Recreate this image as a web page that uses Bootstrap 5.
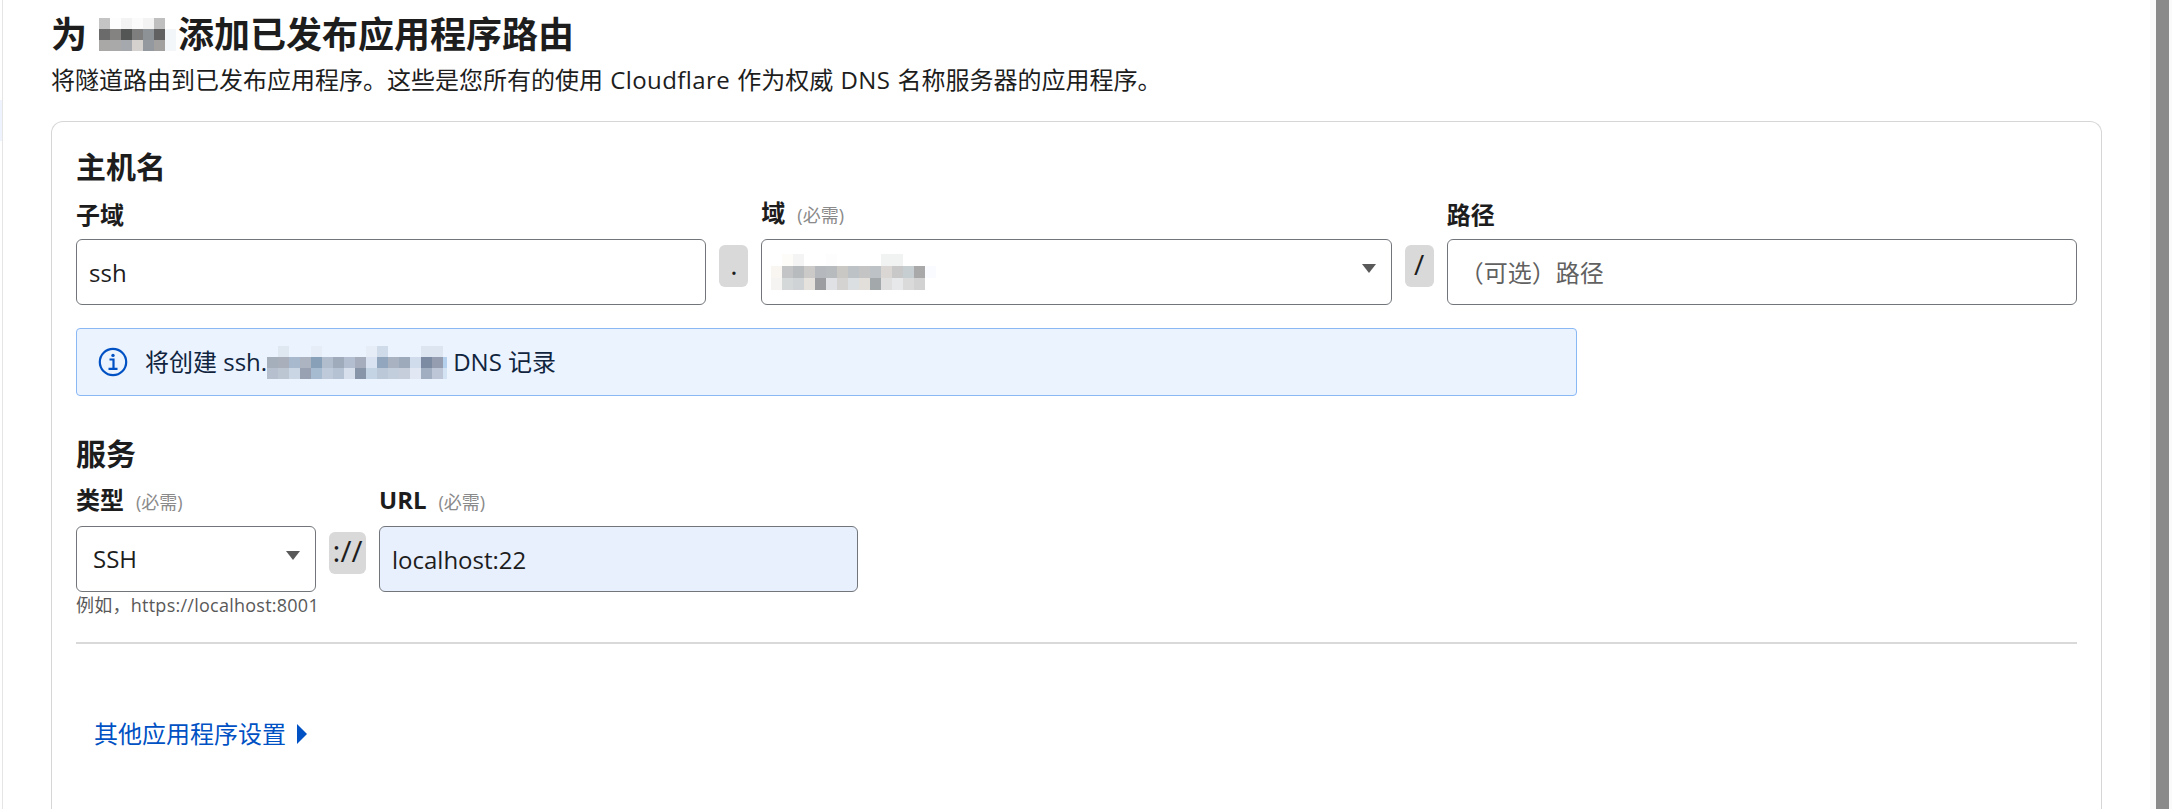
<!DOCTYPE html>
<html lang="zh-CN">
<head>
    <meta charset="UTF-8">
    <meta name="viewport" content="width=device-width, initial-scale=1.0">
    <title>添加已发布应用程序路由</title>
    <link href="https://cdn.jsdelivr.net/npm/bootstrap@5.3.1/dist/css/bootstrap.min.css" rel="stylesheet">
    <script src="https://cdn.jsdelivr.net/npm/bootstrap@5.3.1/dist/js/bootstrap.bundle.min.js"></script>
    <style>
        html, body { height: 100%; overflow: hidden; }
        body {
            background: #fff;
            color: #1d1d1d;
            font-family: "Open Sans", "Noto Sans CJK SC", sans-serif;
            font-size: 24px;
        }
        .page-wrap { height: 809px; }

        /* sidebar edge + scrollbar */
        .side-edge { width: 3px; border-right: 1px solid #e5e5e5; padding-top: 100px; flex: none; }
        .side-edge div { height: 41px; background: #eef3fd; }
        .scroll-track { width: 22px; flex: none; background: #fafafa; padding-left: 6px; }
        .scroll-thumb { width: 13px; height: 100%; background: #8a8a8a; }

        .main-area { padding: 13px 48px 0; min-width: 0; }
        .page-title { font-size: 36px; font-weight: 700; line-height: 44px; margin: 0; color: #1d1d1d; gap: 12px; }
        .page-title .mosaic { overflow: visible; }
        .page-sub { font-size: 24px; line-height: 36px; margin: 5px 0 0; word-spacing: 1px; }
        .latin-word { letter-spacing: .4px; }

        .form-box {
            margin-top: 23px;
            border: 1px solid #d6d6d6;
            border-bottom: 0;
            border-radius: 12px 12px 0 0;
            padding: 25px 24px 0;
            overflow: hidden;
        }
        .sec-title { font-size: 30px; font-weight: 700; line-height: 40px; margin: 0 0 8px; }
        .sec-second { margin-top: 38px; }
        .field-row { gap: 13px; }
        .field { flex: 1 1 0; min-width: 0; }
        .field-type { flex: 0 0 240px; min-width: 0; }
        .field-url { flex: 0 0 479px; }
        .field-label { font-size: 24px; font-weight: 700; line-height: 36px; margin: 0 0 6px; display: block; }
        .field-label small { font-size: 18px; font-weight: 400; color: #8a8a8a; margin-left: 12px; }

        .form-control.cf-input, .form-select.cf-input {
            height: 66px;
            border: 1px solid #72767b;
            border-radius: 6px;
            box-shadow: none;
            color: #1d1d1d;
            font-size: 24px;
            padding: 0 12px;
        }
        .form-control.cf-input::placeholder { color: #616161; opacity: 1; }
        .form-select.cf-input {
            padding-left: 16px;
            background-image: url("data:image/svg+xml,%3Csvg xmlns='http://www.w3.org/2000/svg' viewBox='0 0 14 9'%3E%3Cpath fill='%23595959' d='M0 0h14L7 9z'/%3E%3C/svg%3E");
            background-size: 14px 9px;
            background-position: right 15px top 24px;
        }
        .select-fake { display: flex; align-items: center; padding-left: 9px !important; }
        .input-filled { background: #e8f0fe !important; }

        .sep-chip {
            flex: none;
            width: 29px;
            height: 42px;
            margin-bottom: 18px;
            background: #d9d9d9;
            border-radius: 6px;
            font-size: 28px;
            line-height: 38px;
            text-align: center;
        }
        .sep-chip-wide { width: 37px; font-size: 30px; white-space: nowrap; margin-bottom: 0; margin-top: 50px; align-self: flex-start; }

        .info-note {
            width: 1501px;
            height: 68px;
            margin-top: 23px;
            padding: 0 0 0 21px;
            gap: 17px;
            background: #ebf3fe;
            border: 1px solid #89b8f5;
            border-radius: 4px;
            color: #10243e;
        }
        .note-text { line-height: 32px; }
        .note-text svg { margin: 0 6px 0 0; }

        .hint-text { font-size: 18px; line-height: 26px; color: #595959; margin-top: 0; white-space: nowrap; letter-spacing: .25px; }
        .divider-line { height: 2px; background: #d9d9d9; opacity: 1; border: 0; margin: 24px 0 0; }
        .more-link { color: #0051c3; text-decoration: none; font-size: 24px; line-height: 36px; margin: 72px 0 0 18px; gap: 11px; }
        .mosaic { display: block; flex: none; }
    </style>
</head>
<body>
    <div class="page-wrap d-flex">
        <div class="side-edge"><div></div></div>

        <div class="main-area flex-grow-1 d-flex flex-column">
            <h1 class="page-title d-flex align-items-center">
                <span>为</span>
                <svg class="mosaic" id="blur-title" width="67" height="34"></svg>
                <span class="title-rest">添加已发布应用程序路由</span>
            </h1>
            <p class="page-sub">将隧道路由到已发布应用程序。这些是您所有的使用 <span class="latin-word">Cloudflare</span> 作为权威 <span class="latin-word">DNS</span> 名称服务器的应用程序。</p>

            <div class="form-box flex-grow-1">
                <h2 class="sec-title">主机名</h2>
                <div class="d-flex field-row align-items-end">
                    <div class="field">
                        <label class="field-label" for="sub">子域</label>
                        <input class="form-control cf-input" id="sub" type="text" value="ssh">
                    </div>
                    <div class="sep-chip">.</div>
                    <div class="field">
                        <span class="field-label">域<small>(必需)</small></span>
                        <div class="form-select cf-input select-fake">
                            <svg class="mosaic" id="blur-domain" width="165" height="36"></svg>
                        </div>
                    </div>
                    <div class="sep-chip">/</div>
                    <div class="field">
                        <label class="field-label" for="path">路径</label>
                        <input class="form-control cf-input" id="path" type="text" placeholder="（可选）路径">
                    </div>
                </div>

                <div class="info-note d-flex align-items-center">
                    <svg width="30" height="30" viewBox="0 0 30 30" fill="none" stroke="#0051c3">
                        <circle cx="15" cy="15" r="13.2" stroke-width="2.2"/>
                        <path d="M11.5 12.5h4v9M10.5 21.8h9" stroke-width="2.2"/>
                        <circle cx="15" cy="8.4" r="1.7" fill="#0051c3" stroke="none"/>
                    </svg>
                    <div class="note-text d-flex align-items-center">
                        <span>将创建 ssh.</span>
                        <svg class="mosaic" id="blur-host" width="180" height="33"></svg>
                        <span>DNS 记录</span>
                    </div>
                </div>

                <h2 class="sec-title sec-second">服务</h2>
                <div class="d-flex field-row">
                    <div class="field-type">
                        <span class="field-label">类型<small>(必需)</small></span>
                        <select class="form-select cf-input">
                            <option>SSH</option>
                        </select>
                        <div class="hint-text">例如，https://localhost:8001</div>
                    </div>
                    <div class="sep-chip sep-chip-wide">://</div>
                    <div class="field-url">
                        <label class="field-label" for="url">URL<small>(必需)</small></label>
                        <input class="form-control cf-input input-filled" id="url" type="text" value="localhost:22">
                    </div>
                </div>

                <hr class="divider-line">
                <a class="more-link d-inline-flex align-items-center" href="#">
                    <span>其他应用程序设置</span>
                    <svg width="10" height="20" viewBox="0 0 10 20"><path fill="#0051c3" d="M0 0l10 10L0 20z"/></svg>
                </a>
            </div>
        </div>

        <div class="scroll-track"><div class="scroll-thumb"></div></div>
    </div>

    <script>
        // blurred-out names in the screenshot, drawn as pixel blocks
        const blurData = {
            "blur-title": { rowH: 11, rows: [
                ["#c4c4c4", "#fdfdfd", "#f3f3f3", "#fbfbfb", "#f3f3f3", "#bfbfbf"],
                ["#6b6b6b", "#858382", "#545555", "#7e7e7e", "#8d9297", "#616161", "#f3f6f9"],
                ["#a9a8a7", "#a9a9a9", "#a5a9ad", "#d4d1ce", "#93999e", "#a3a19f", "#f4f7fa"]
            ] },
            "blur-domain": { rowH: 12, rows: [
                [null, "#fdfcf9", "#f4f4f4", null, null, "#fdfdfd", null, null, null, null, "#f1f3f2", "#f1f3f2"],
                ["#f9f5f0", "#c2c4c6", "#b8bbbe", "#cbcac8", "#b5b8bc", "#b8bbbe", "#cac8c5", "#bdc2c6", "#c5c4c4", "#bcc2c6", "#d9d6d3", "#c8c8c8", "#c7ced2", "#a9a9a9", "#fafbff"],
                ["#f5f4f2", "#d5d8d9", "#d0d3d6", "#e5e2de", "#9b9da1", "#dfe1e4", "#d4d3d1", "#dcdfe2", "#e2deda", "#a3a8ab", "#e0dfdf", "#e6e8ea", "#dadada", "#d2d2d2"]
            ] },
            "blur-host": { rowH: 11, rows: [
                [null, "#dfe7f1", null, null, "#e6edf6", null, null, null, null, "#e6edf6", "#cfdbe8", null, null, null, "#dde5f0", "#dde5f0"],
                ["#a5aebb", "#a9b0bc", "#a9b9cd", "#acb4c1", "#88a0b8", "#b1bccd", "#9faabb", "#b3bfd0", "#a6aebd", "#d8e2f0", "#92a6bd", "#a8b2c0", "#9daabc", "#d0dceb", "#7c8ba1", "#959db0", "#b5d0ec"],
                ["#b5bfcd", "#bcc5d2", "#cbd6e5", "#98a1b2", "#a6bbd0", "#bec9d9", "#b4c2d4", "#d6dfeb", "#8895a8", "#c5d4e5", "#bac8d8", "#c3cedc", "#c6cedb", "#e1e8f3", "#a1adc0", "#bdc6d6", "#d4e3f4"]
            ] }
        };

        Object.keys(blurData).forEach(id => {
            const svg = document.getElementById(id);
            const { rowH, rows } = blurData[id];
            let out = "";
            rows.forEach((row, y) => {
                row.forEach((color, x) => {
                    if (color) {
                        out += `<rect x="${x * 11}" y="${y * rowH}" width="11" height="${rowH}" fill="${color}"/>`;
                    }
                });
            });
            svg.innerHTML = out;
        });
    </script>
</body>
</html>
